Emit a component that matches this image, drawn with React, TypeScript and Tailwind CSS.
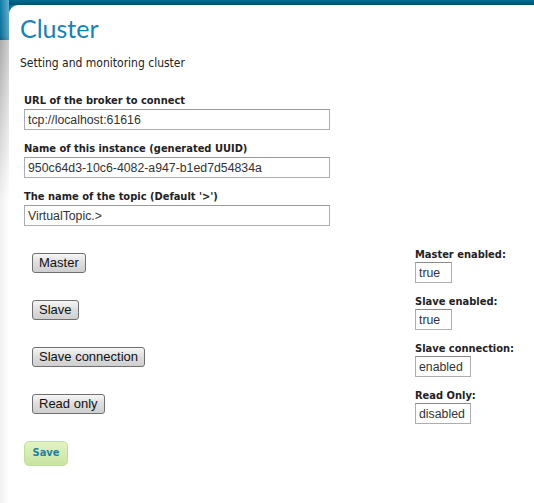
import React from 'react';

const labelFont = "font-['Tahoma','DejaVu_Sans_Condensed','DejaVu_Sans',sans-serif]";
const inputFont = "font-['Arial','Liberation_Sans',sans-serif]";

function Field({ label, value }: { label: string; value: string }) {
  return (
    <div className="mb-[12px]">
      <label className={`block text-[11px] font-bold leading-[13px] text-[#222] mb-[2px] ${labelFont}`}>
        {label}
      </label>
      <input
        readOnly
        value={value}
        className={`block w-[306px] h-[21px] border border-[#abadb3] border-t-[#9a9a9a] px-[3px] text-[12.3px] text-[#333] outline-none ${inputFont}`}
      />
    </div>
  );
}

const rows = [
  { button: 'Master', label: 'Master enabled:', value: 'true', w: 'w-[37px]' },
  { button: 'Slave', label: 'Slave enabled:', value: 'true', w: 'w-[37px]' },
  { button: 'Slave connection', label: 'Slave connection:', value: 'enabled', w: 'w-[56px]' },
  { button: 'Read only', label: 'Read Only:', value: 'disabled', w: 'w-[56px]' },
];

export default function App() {
  return (
    <div className="flex w-[534px] h-[503px] overflow-hidden bg-white">
      <div className="w-[9px] shrink-0 bg-[linear-gradient(to_right,rgba(0,0,0,0.06),rgba(255,255,255,0.35)),linear-gradient(to_bottom,#0f86b4_0px,#0a74a0_36px,#08628a_40px,#b4b4b4_40px,#d8d8d8_110px,#ffffff_200px)]" />
      <div className="flex-1 flex flex-col bg-[linear-gradient(to_bottom,#006a90_0px,#004f70_5px,#0a74a0_5px,#0a74a0_40px,#ffffff_40px)]">
        <div className="h-[5px] shrink-0" />
        <div className="flex-1 bg-white rounded-tl-[9px] pl-[11px] pt-[6px]">
          <h1 className="text-[25px] leading-[34px] text-[#1a80b6] font-['Segoe_UI','Lato','Open_Sans',sans-serif]">
            Cluster
          </h1>
          <p className={`mt-[11px] text-[12px] leading-[14px] text-[#222] ${labelFont}`}>
            Setting and monitoring cluster
          </p>
          <div className="pl-[4px] mt-[24px]">
            <Field label="URL of the broker to connect" value="tcp://localhost:61616" />
            <Field label="Name of this instance (generated UUID)" value="950c64d3-10c6-4082-a947-b1ed7d54834a" />
            <Field label="The name of the topic (Default '>')" value="VirtualTopic.>" />
          </div>
          <div className="mt-[18px]">
            {rows.map((r) => (
              <div key={r.button} className="flex h-[47px]">
                <div className="flex-1 pl-[12px] pt-[5px]">
                  <button
                    type="button"
                    className={`h-[20px] px-[6px] border border-[#707070] rounded-[3px] bg-[linear-gradient(to_bottom,#f6f6f6,#dddddd_50%,#cfcfcf)] text-[13px] leading-[18px] text-[#111] ${inputFont}`}
                  >
                    {r.button}
                  </button>
                </div>
                <div className="w-[119px] pt-[4px]">
                  <div className={`text-[11px] font-bold leading-[13px] text-[#222] ${labelFont}`}>{r.label}</div>
                  <input
                    readOnly
                    value={r.value}
                    className={`mt-[1px] block ${r.w} h-[21px] border border-[#abadb3] border-t-[#8a8a8a] px-[3px] text-[12.3px] text-[#333] outline-none ${inputFont}`}
                  />
                </div>
              </div>
            ))}
          </div>
          <div className="pl-[4px] mt-[6px]">
            <button
              type="button"
              className={`w-[44px] h-[25px] rounded-[5px] border border-[#bfe09b] bg-[linear-gradient(to_bottom,#e2f3c6,#c8e4a0)] text-[11px] font-bold text-[#1d7ea6] ${labelFont}`}
            >
              Save
            </button>
          </div>
        </div>
      </div>
    </div>
  );
}
